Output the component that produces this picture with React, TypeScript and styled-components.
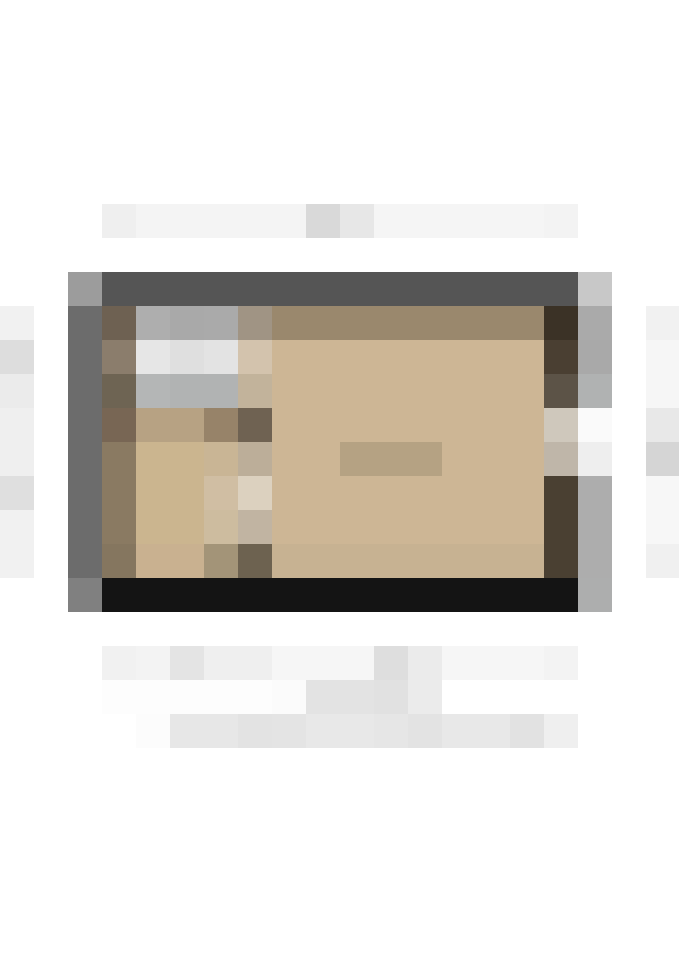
import React from 'react';
import styled, { createGlobalStyle } from 'styled-components';

// every run is [colour, number of 34px tiles], read left to right from x=0
type Run = [string, number];

const W = '#ffffff';
const SAND = '#cdb695';

const heading: Run[][] = [
  [[W, 3], ['#efefef', 1], ['#f4f4f4', 5], ['#d9d9d9', 1], ['#e7e7e7', 1], ['#f5f5f5', 5], ['#f3f3f3', 1]],
];

const stage: Run[][] = [
  [[W, 2], ['#9c9c9c', 1], ['#555555', 14], ['#c8c8c8', 1]],
  [['#f1f1f1', 1], [W, 1], ['#6c6c6c', 1], ['#6e6152', 1], ['#aeaeae', 1], ['#a9a9a9', 1], ['#aaaaaa', 1], ['#a09484', 1], ['#9a886d', 8], ['#3b3226', 1], ['#aaaaaa', 1], [W, 1], ['#f1f1f1', 1]],
  [['#dddddd', 1], [W, 1], ['#6c6c6c', 1], ['#8b7d6c', 1], ['#e6e6e6', 1], ['#dfdfdf', 1], ['#e3e3e3', 1], ['#d3c3ad', 1], [SAND, 8], ['#4a3f32', 1], ['#a9a9a9', 1], [W, 1], ['#f6f6f6', 1]],
  [['#ebebeb', 1], [W, 1], ['#6c6c6c', 1], ['#6e6453', 1], ['#b4b6b6', 1], ['#b1b3b3', 2], ['#c2b39b', 1], [SAND, 8], ['#5c5347', 1], ['#b0b2b2', 1], [W, 1], ['#f6f6f6', 1]],
  [['#efefef', 1], [W, 1], ['#6c6c6c', 1], ['#786654', 1], ['#b7a283', 2], ['#978369', 1], ['#6f6252', 1], [SAND, 8], ['#cfc8bc', 1], ['#fafafa', 1], [W, 1], ['#e8e8e8', 1]],
  [['#efefef', 1], [W, 1], ['#6c6c6c', 1], ['#8a7a62', 1], ['#cbb58f', 2], ['#c9b595', 1], ['#bcae99', 1], [SAND, 2], ['#b5a283', 3], [SAND, 3], ['#bfb6a9', 1], ['#eeeeee', 1], [W, 1], ['#d5d5d5', 1]],
  [['#dfdfdf', 1], [W, 1], ['#6c6c6c', 1], ['#8a7a62', 1], ['#cbb58f', 2], ['#d0bea3', 1], ['#dcd1bf', 1], [SAND, 8], ['#4a4032', 1], ['#adadad', 1], [W, 1], ['#f7f7f7', 1]],
  [['#f1f1f1', 1], [W, 1], ['#6c6c6c', 1], ['#8a7a62', 1], ['#cbb58f', 2], ['#cdbc9f', 1], ['#c1b4a2', 1], [SAND, 8], ['#4a4032', 1], ['#adadad', 1], [W, 1], ['#f7f7f7', 1]],
  [['#f1f1f1', 1], [W, 1], ['#6c6c6c', 1], ['#85765f', 1], ['#c9b190', 2], ['#a39478', 1], ['#6d6250', 1], ['#c7b292', 8], ['#4a4032', 1], ['#adadad', 1], [W, 1], ['#f0f0f0', 1]],
  [[W, 2], ['#808080', 1], ['#141414', 14], ['#adaeae', 1]],
];

const caption: Run[][] = [
  [[W, 3], ['#f1f1f1', 1], ['#f3f3f3', 1], ['#e4e4e4', 1], ['#efefef', 2], ['#f6f6f6', 3], ['#dedede', 1], ['#ebebeb', 1], ['#f6f6f6', 3], ['#f3f3f3', 1]],
  [[W, 3], ['#fdfdfd', 5], ['#fbfbfb', 1], ['#e3e3e3', 2], ['#e1e1e1', 1], ['#ebebeb', 1]],
  [[W, 4], ['#fcfcfc', 1], ['#e7e7e7', 2], ['#e3e3e3', 1], ['#e4e4e4', 1], ['#e8e8e8', 2], ['#e6e6e6', 1], ['#e3e3e3', 1], ['#e8e8e8', 2], ['#e2e2e2', 1], ['#efefef', 1]],
];

const GlobalStyle = createGlobalStyle`
  html, body {
    margin: 0;
    padding: 0;
    background: #ffffff;
    overflow-x: hidden;
  }
`;

const Page = styled.main`
  width: 680px;
  height: 960px;
  padding-top: 204px;
  box-sizing: border-box;
  display: flex;
  flex-direction: column;
  gap: 34px;
  overflow: hidden;
`;

const Block = styled.section`
  display: flex;
  flex-direction: column;
`;

const Strip = styled.div`
  display: flex;
  height: 34px;
`;

const Tile = styled.div<{ $c: string; $n: number }>`
  flex: none;
  width: ${p => p.$n * 34}px;
  height: 100%;
  background: ${p => p.$c};
`;

const Rows: React.FC<{ rows: Run[][] }> = ({ rows }) => (
  <Block>
    {rows.map((row, i) => (
      <Strip key={i}>
        {row.map(([c, n], j) => (
          <Tile key={j} $c={c} $n={n} />
        ))}
      </Strip>
    ))}
  </Block>
);

export default function App() {
  return (
    <>
      <GlobalStyle />
      <Page>
        <Rows rows={heading} />
        <Rows rows={stage} />
        <Rows rows={caption} />
      </Page>
    </>
  );
}
